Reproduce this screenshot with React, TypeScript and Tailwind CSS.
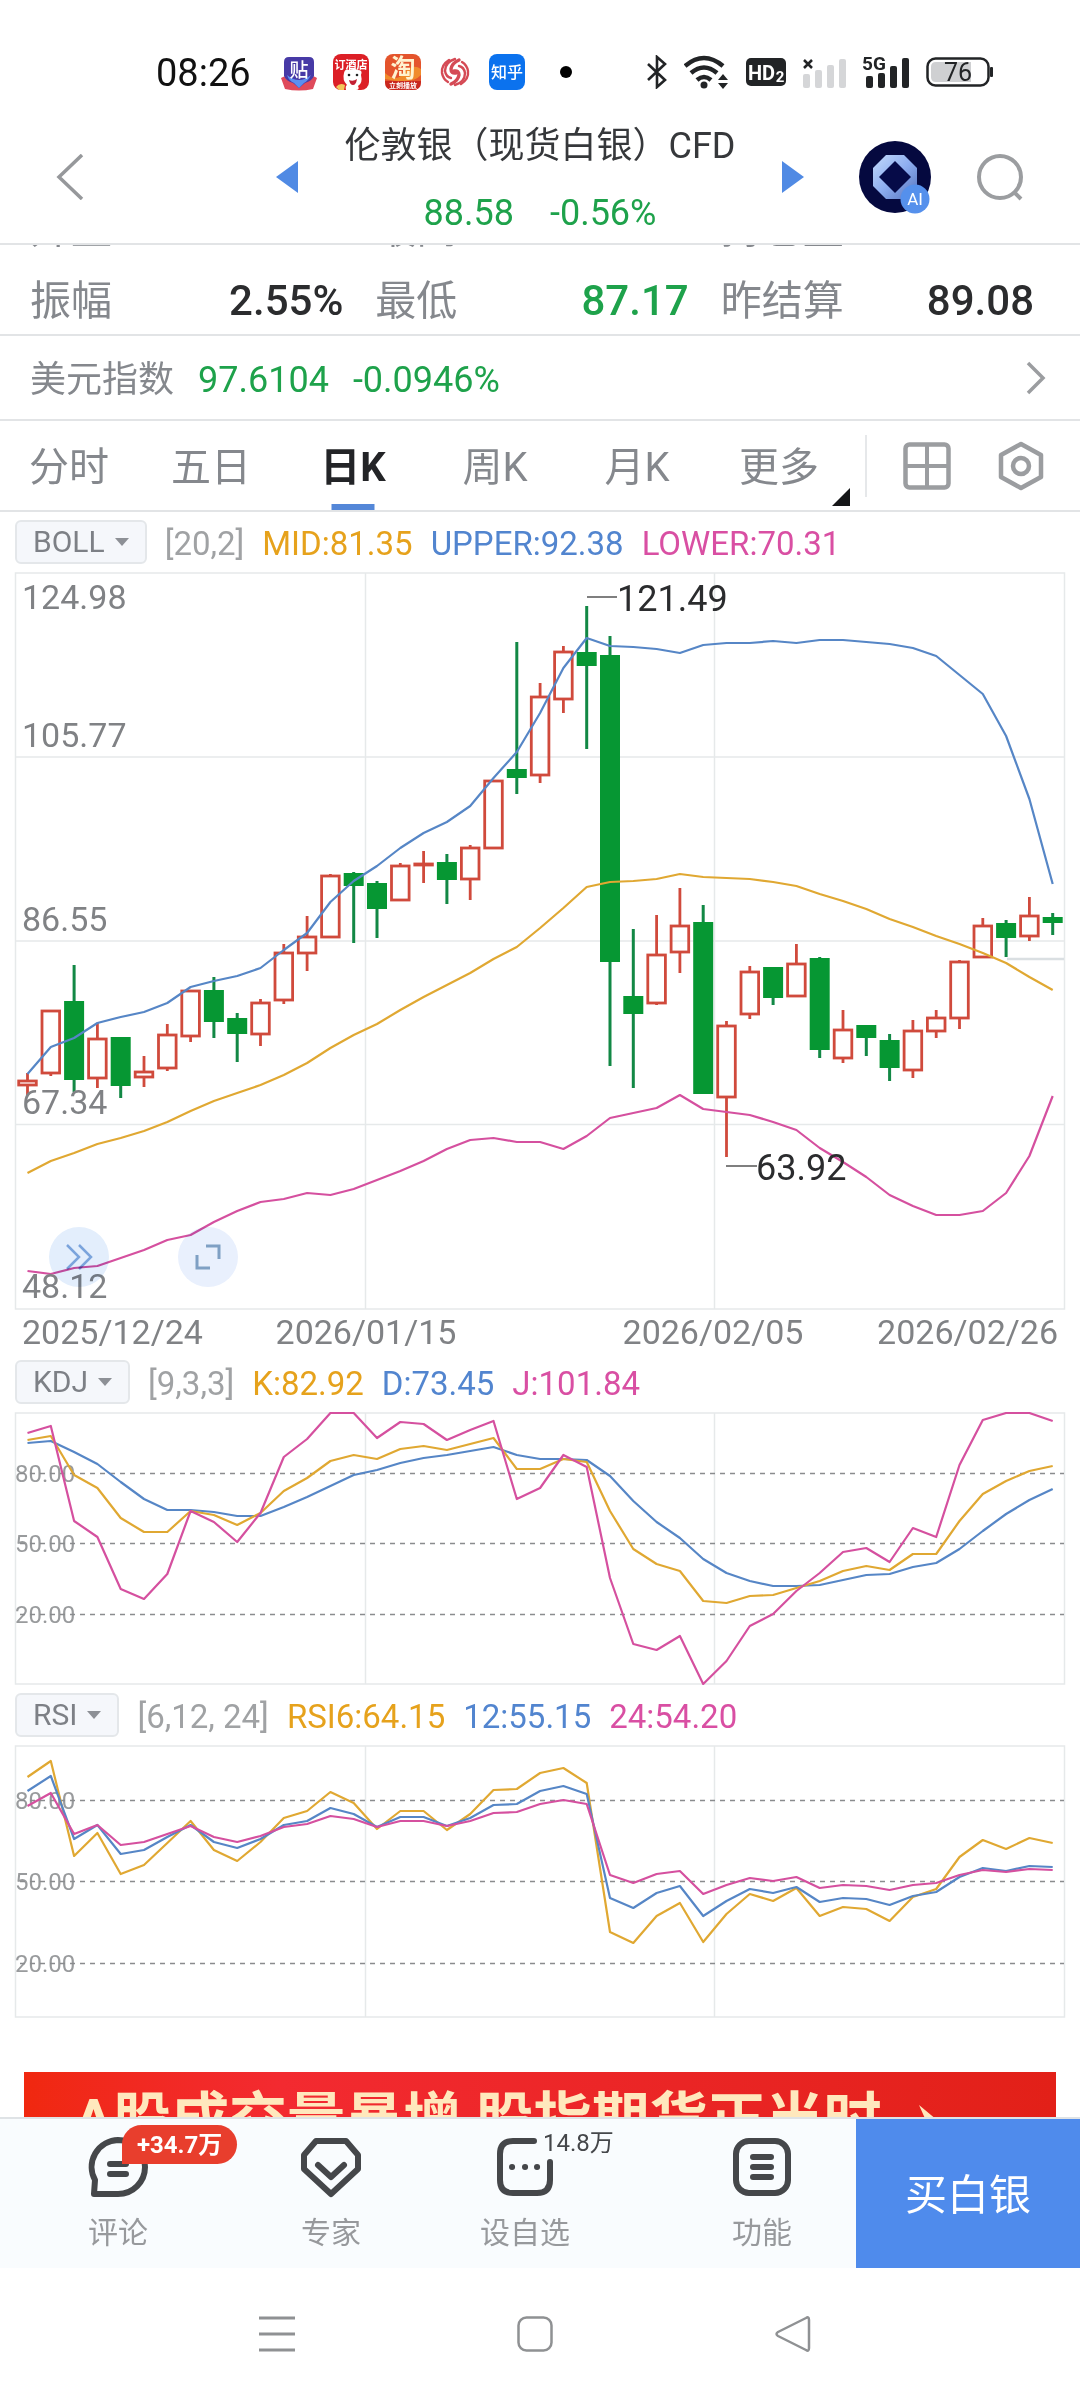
import type { ReactNode } from "react";

const STEP = 23.3;
const xAt = (i: number) => 27.5 + i * STEP;

const YELLOW = "#e0a832";
const BLUE = "#5686c6";
const PINK = "#d5509f";
const GRID = "#e6e9ea";

// direction, high, body top, body bottom, low
type Candle = ["r" | "g", number, number, number, number];

const candles: Candle[] = [
  ["r", 501, 508, 514, 523], ["r", 438, 438, 502, 504], ["g", 393, 429, 508, 520], ["r", 451, 466, 507, 516],
  ["g", 465, 465, 514, 526], ["r", 484, 499, 506, 515], ["r", 452, 462, 497, 499], ["r", 418, 418, 465, 470],
  ["g", 405, 418, 450, 466], ["g", 441, 446, 462, 490], ["r", 427, 430, 463, 474], ["r", 372, 380, 429, 432],
  ["r", 344, 364, 382, 399], ["r", 302, 303, 366, 366], ["g", 300, 301, 314, 371], ["g", 309, 311, 337, 366],
  ["r", 291, 293, 329, 329], ["r", 279, 291, 294, 311], ["g", 282, 290, 308, 332], ["r", 273, 275, 308, 328],
  ["r", 208, 208, 277, 277], ["g", 70, 197, 206, 222], ["r", 111, 124, 204, 211], ["r", 74, 79, 128, 141],
  ["g", 34, 80, 94, 177], ["g", 64, 83, 390, 494], ["g", 357, 424, 442, 516], ["r", 343, 382, 432, 433],
  ["r", 316, 353, 381, 401], ["g", 333, 350, 522, 522], ["r", 449, 453, 526, 585], ["r", 394, 399, 443, 447],
  ["g", 395, 395, 426, 433], ["r", 372, 391, 425, 425], ["g", 385, 386, 478, 486], ["r", 438, 457, 487, 491],
  ["g", 453, 453, 466, 484], ["g", 462, 468, 496, 509], ["r", 448, 458, 499, 506], ["r", 438, 445, 460, 466],
  ["r", 388, 389, 447, 457], ["r", 346, 353, 386, 386], ["g", 348, 351, 366, 385], ["r", 325, 343, 365, 369],
  ["g", 341, 345, 351, 363],
];

const boll = {
  upper: [502, 475, 466, 451, 445, 440, 431, 415, 409, 404, 396, 378, 361, 330, 309, 294, 276, 261, 250, 234, 206, 180, 141, 96, 66, 74, 75, 77, 81, 73, 71, 71, 69, 71, 68, 68, 70, 72, 76, 84, 103, 122, 164, 227, 312],
  mid: [601, 589, 581, 572, 566, 559, 550, 539, 529, 521, 513, 503, 491, 476, 463, 452, 438, 425, 413, 401, 387, 375, 356, 336, 315, 310, 309, 307, 302, 305, 306, 307, 310, 314, 322, 329, 337, 347, 355, 364, 372, 381, 391, 405, 418],
  lower: [699, 702, 696, 694, 686, 678, 668, 663, 650, 639, 630, 627, 621, 623, 617, 608, 599, 589, 577, 568, 566, 570, 570, 577, 564, 546, 541, 536, 523, 537, 540, 543, 550, 558, 576, 590, 605, 623, 634, 643, 643, 639, 621, 584, 524],
};

const kdj = {
  k: [28, 24, 63, 76, 106, 120, 120, 99, 103, 113, 101, 79, 66, 49, 43, 47, 37, 34, 38, 32, 26, 57, 57, 47, 50, 99, 137, 152, 159, 189, 191, 184, 183, 176, 169, 159, 154, 158, 142, 142, 109, 82, 69, 59, 54],
  d: [31, 29, 40, 52, 70, 87, 98, 98, 100, 104, 104, 95, 85, 74, 63, 58, 51, 46, 43, 39, 35, 43, 47, 47, 48, 64, 89, 110, 126, 147, 161, 169, 174, 174, 173, 168, 163, 162, 155, 151, 137, 119, 102, 88, 77],
  j: [21, 14, 109, 125, 177, 187, 162, 99, 110, 130, 101, 45, 27, 1, 1, 26, 10, 12, 28, 18, 9, 87, 76, 43, 55, 166, 232, 238, 224, 272, 249, 214, 202, 179, 161, 140, 136, 150, 116, 125, 53, 8, 1, 1, 9],
};

const rsi = {
  six: [32, 16, 111, 88, 129, 120, 98, 76, 105, 116, 97, 73, 66, 47, 58, 84, 66, 66, 85, 69, 45, 44, 28, 23, 38, 187, 198, 171, 158, 197, 169, 149, 156, 143, 171, 162, 164, 176, 152, 144, 112, 95, 104, 93, 98],
  twelve: [46, 31, 94, 80, 109, 105, 92, 80, 97, 103, 94, 80, 76, 63, 69, 82, 72, 72, 81, 73, 60, 59, 46, 41, 49, 153, 163, 148, 141, 171, 156, 144, 148, 142, 157, 153, 154, 160, 151, 147, 132, 123, 126, 121, 122],
  twentyFour: [61, 48, 89, 80, 100, 97, 89, 81, 92, 97, 91, 82, 79, 71, 74, 82, 76, 76, 81, 76, 68, 67, 59, 55, 59, 130, 138, 129, 126, 149, 140, 133, 136, 132, 143, 140, 141, 145, 140, 138, 130, 125, 127, 124, 125],
};

function Series({ values, color }: { values: number[]; color: string }) {
  return (
    <polyline
      points={values.map((y, i) => `${xAt(i)},${y}`).join(" ")}
      fill="none"
      stroke={color}
      strokeWidth={2.2}
      strokeLinejoin="round"
    />
  );
}

function Frame({ height }: { height: number }) {
  return (
    <g stroke={GRID} strokeWidth={1.5} fill="none">
      <rect x={15.5} y={1} width={1049} height={height} />
      <path d={`M365.5 1V${height + 1}M714.5 1V${height + 1}`} />
    </g>
  );
}

function MainChart() {
  return (
    <div className="relative">
      <svg viewBox="0 0 1080 780" className="block h-auto w-full" role="img" aria-label="日K线图">
        <Frame height={736} />
        <path d="M15.5 185H1064.5M15.5 369H1064.5M15.5 552.5H1064.5" stroke={GRID} strokeWidth={1.5} />
        <path d="M1007 387H1064" stroke="#dadfe2" strokeWidth={2.5} />
        {candles.map(([dir, high, top, bottom, low], i) => {
          const x = xAt(i);
          if (dir === "g") {
            return (
              <g key={i} fill="#069733">
                <rect x={x - 1.5} y={high} width={3} height={low - high} fill="#128845" />
                <rect x={x - 10} y={top} width={20} height={bottom - top} />
              </g>
            );
          }
          return (
            <g key={i} stroke="#d04a3c" strokeWidth={2.8} fill="none">
              <path d={`M${x} ${high}V${top}M${x} ${bottom}V${low}`} />
              <rect x={x - 8.8} y={top + 1} width={17.6} height={Math.max(bottom - top - 2, 1)} />
            </g>
          );
        })}
        <Series values={boll.upper} color={BLUE} />
        <Series values={boll.mid} color={YELLOW} />
        <Series values={boll.lower} color={PINK} />
        <g fill="#808285" fontSize={34}>
          <text x={22} y={37}>124.98</text>
          <text x={22} y={175}>105.77</text>
          <text x={22} y={359}>86.55</text>
          <text x={22} y={542}>67.34</text>
          <text x={22} y={726}>48.12</text>
          <text x={22} y={772}>2025/12/24</text>
          <text x={366} y={772} textAnchor="middle">2026/01/15</text>
          <text x={713} y={772} textAnchor="middle">2026/02/05</text>
          <text x={1058} y={772} textAnchor="end">2026/02/26</text>
        </g>
        <path d="M587 25H617M726 594H757" stroke="#555" strokeWidth={1.5} />
        <g fill="#2b2c2e" fontSize={36}>
          <text x={617} y={39}>121.49</text>
          <text x={756} y={608}>63.92</text>
        </g>
      </svg>
      <button type="button" aria-label="快进" className="absolute bottom-[65px] left-[49px] flex size-[60px] items-center justify-center rounded-full bg-[#e3eefc] mix-blend-multiply">
        <svg viewBox="0 0 28 26" className="h-[26px] w-7" fill="none" stroke="#7ba4dc" strokeWidth={2.5}>
          <path d="M2 1l12 12L2 25M14 1l12 12-12 12" />
        </svg>
      </button>
      <button type="button" aria-label="全屏" className="absolute bottom-[65px] left-[178px] flex size-[60px] items-center justify-center rounded-full bg-[#e9f0fd] mix-blend-multiply">
        <svg viewBox="0 0 26 26" className="size-[26px]" fill="none" stroke="#7fa0c4" strokeWidth={3}>
          <path d="M11 2H24V15M2 11V24H15" />
        </svg>
      </button>
    </div>
  );
}

function SubChart({ label, levels, lines }: { label: string; levels: [number, string][]; lines: [number[], string][] }) {
  return (
    <svg viewBox="0 0 1080 273" className="block h-auto w-full" role="img" aria-label={label}>
      <Frame height={271} />
      {levels.map(([y, text]) => (
        <g key={text}>
          <text x={15} y={y + 9} fontSize={24} fill="#999b9d">{text}</text>
          <path d={`M20 ${y + 0.5}H1064`} stroke="#8a8c8e" strokeWidth={1.5} strokeDasharray="5 5" />
        </g>
      ))}
      {lines.map(([values, color]) => (
        <Series key={color} values={values} color={color} />
      ))}
    </svg>
  );
}

function IndicatorRow({ name, options, params, values }: { name: string; options: string[]; params: string; values: [string, string][] }) {
  return (
    <div className="flex h-[60px] items-center gap-[18px] px-[15px] text-[33px] leading-none">
      <div className="relative flex h-11 items-center">
        <select
          aria-label={`${name} 指标`}
          defaultValue={name}
          className="field-sizing-content h-11 appearance-none rounded-md border-2 border-[#e4e7ea] bg-[#f5f7fb] pr-[40px] pl-4 text-[30px] leading-none text-[#7d8086]"
        >
          {options.map((o) => (
            <option key={o}>{o}</option>
          ))}
        </select>
        <svg viewBox="0 0 14 8" className="pointer-events-none absolute right-[18px] h-2 w-3.5" fill="#8d9096">
          <path d="M0 0H14L7 8z" />
        </svg>
      </div>
      <span className="pt-0.5 text-[#a0a2a4]">{params}</span>
      {values.map(([text, cls]) => (
        <span key={text} className={`pt-0.5 ${cls}`}>{text}</span>
      ))}
    </div>
  );
}

function StatusBar() {
  return (
    <div className="flex h-[110px] items-center pt-[34px] pr-[86px] pl-[156px]">
      <span className="pt-0.5 text-[38px] leading-none text-[#111]">08:26</span>
      <div className="ml-[29px] flex items-center gap-[14px]">
        <svg viewBox="0 0 38 38" className="size-[38px]">
          <path d="M1 25q6-4 10 1l8 3 8-3q5-5 10-1l-4 11q-14 3-28 0z" fill="#df4a5b" />
          <path d="M9 4h20q5 0 5 5v14q-2 5-9 7l-6 5-6-5q-7-2-9-7V9q0-5 5-5z" fill="#473aa6" />
          <path d="M7 22q12 10 24 0-3 6-7 8l-5 5-5-5q-5-2-7-8z" fill="#5b8ff0" />
          <text x="19" y="24" fontSize="19" fill="#fff" textAnchor="middle" fontWeight="500">贴</text>
        </svg>
        <svg viewBox="0 0 38 38" className="size-[38px]">
          <rect x="1" y="1" width="36" height="36" rx="8" fill="#dc1f26" />
          <text x="19" y="16" fontSize="11" fill="#fff" textAnchor="middle" fontWeight="700">订酒店</text>
          <path d="M12 20q1-5 5-3 5-2 9 0 5 0 3 5 2 8-3 11 2 4-2 4H14q-1-4 1-5-5-5-3-12z" fill="#fff" />
          <path d="M17 27q4 2 8-1-1 6-4 6t-4-5z" fill="#c32034" />
          <circle cx="17" cy="22" r="1.3" fill="#222" />
          <circle cx="25" cy="22" r="1.3" fill="#222" />
          <path d="M4 34q4-5 9-2l-1 5H7z" fill="#f3c65a" />
        </svg>
        <svg viewBox="0 0 38 38" className="size-[38px]">
          <rect x="1" y="1" width="36" height="36" rx="8" fill="#e4542c" />
          <path d="M1 20Q12 30 20 20T37 16V22Q28 32 1 26z" fill="#f08b2c" />
          <text x="19" y="24" fontSize="25" fill="#fff3d0" textAnchor="middle" fontWeight="700">淘</text>
          <path d="M1 28H37V29q0 8-8 8H9q-8 0-8-8z" fill="#c9271e" />
          <text x="19" y="35" fontSize="7" fill="#fff" textAnchor="middle" fontWeight="700">立刻播放</text>
        </svg>
        <svg viewBox="0 0 38 38" className="size-[38px]" fill="none" stroke="#d54a55" strokeWidth="2.4" strokeLinecap="round">
          <path d="M20 20q-5 1-5-4 1-6 8-9M18 18q5-1 5 4-1 6-8 9" strokeWidth="3.4" />
          <path d="M19 6Q9 9 9 18q1 6 6 7M19 32q10-3 10-12-1-6-6-7" />
          <path d="M13 7Q5 12 6 20q1 6 6 9M25 31q8-5 7-13-1-6-6-9" />
        </svg>
        <svg viewBox="0 0 38 38" className="size-[38px]">
          <rect x="1" y="1" width="36" height="36" rx="8" fill="#0b72ee" />
          <text x="19" y="25" fontSize="16" fill="#fff" textAnchor="middle" fontWeight="500">知乎</text>
        </svg>
      </div>
      <span className="ml-[34px] size-3 rounded-full bg-black" />
      <div className="ml-auto flex items-center gap-4 text-[#222426]">
        <svg viewBox="0 0 22 34" className="h-[34px] w-[22px]" fill="none" stroke="currentColor" strokeWidth="2.6">
          <path d="M2 9L19 25 11 32V2L19 9 2 25" />
        </svg>
        <svg viewBox="0 0 46 34" className="h-[34px] w-[46px]" fill="none" stroke="currentColor" strokeWidth="4.5">
          <path d="M1 11Q20-5 39 11M7 18Q20 7 33 18M13 25Q20 19 27 25" />
          <circle cx="20" cy="30" r="3.500" fill="currentColor" stroke="none" />
          <path d="M34 25l5-6 5 6zM34 28l5 6 5-6z" fill="currentColor" stroke="none" />
        </svg>
        <svg viewBox="0 0 40 28" className="h-7 w-10">
          <rect width="40" height="28" rx="5" fill="currentColor" />
          <text x="2" y="22" fontSize="20" fontWeight="700" fill="#fff">HD</text>
          <text x="34" y="24" fontSize="15" fontWeight="700" fill="#fff" textAnchor="middle">2</text>
        </svg>
        <svg viewBox="0 0 44 32" className="h-8 w-11">
          <path d="M2 4l8 8M10 4l-8 8" stroke="currentColor" strokeWidth="2.500" />
          <g fill="#d5d6d8">
            <rect x="1" y="18" width="7" height="14" rx="2" />
            <rect x="13" y="14" width="7" height="18" rx="2" />
            <rect x="25" y="9" width="7" height="23" rx="2" />
            <rect x="37" y="3" width="7" height="29" rx="2" />
          </g>
        </svg>
        <svg viewBox="0 0 48 34" className="h-[34px] w-12" fill="currentColor">
          <text x="0" y="15" fontSize="19" fontWeight="700">5G</text>
          <rect x="4" y="21" width="7" height="12" rx="2" />
          <rect x="16" y="18" width="7" height="15" rx="2" />
          <rect x="28" y="11" width="7" height="22" rx="2" />
          <rect x="40" y="3" width="7" height="30" rx="2" />
        </svg>
        <svg viewBox="0 0 68 32" className="h-8 w-[68px]">
          <rect x="1.500" y="2.500" width="61" height="27" rx="8" fill="#fff" stroke="currentColor" strokeWidth="2.500" />
          <path d="M10 6H45V26H10q-5 0-5-5V11q0-5 5-5z" fill="#cfd0d2" />
          <rect x="64" y="11" width="3" height="10" rx="1" fill="currentColor" />
          <text x="32" y="25" fontSize="25" textAnchor="middle" fill="currentColor">76</text>
        </svg>
      </div>
    </div>
  );
}

function Header() {
  return (
    <header className="flex h-[135px] items-center border-b-2 border-[#e2e4e6] px-14">
      <button type="button" aria-label="返回" className="w-[30px]">
        <svg viewBox="0 0 28 46" className="h-[46px] w-7" fill="none" stroke="#96989b" strokeWidth="3.500">
          <path d="M26 1L3 23 26 45" />
        </svg>
      </button>
      <div className="mr-[54px] ml-[190px] flex flex-1 items-center justify-between">
        <button type="button" aria-label="上一个">
          <svg viewBox="0 0 22 32" className="h-8 w-[22px]" fill="#508ae4"><path d="M22 0V32L0 16z" /></svg>
        </button>
        <div className="pt-1.5 text-center text-[36px] leading-[67px]">
          <h1 className="whitespace-nowrap text-[#36383b]">伦敦银（现货白银）CFD</h1>
          <p className="flex justify-center gap-9 text-[#1ea24b]"><span>88.58</span><span>-0.56%</span></p>
        </div>
        <button type="button" aria-label="下一个">
          <svg viewBox="0 0 22 32" className="h-8 w-[22px]" fill="#508ae4"><path d="M0 0V32L22 16z" /></svg>
        </button>
      </div>
      <button type="button" aria-label="AI 助手">
        <svg viewBox="0 0 74 74" className="size-[74px]">
          <defs>
            <linearGradient id="ring" x1="0" y1="0" x2="1" y2="1">
              <stop offset="0" stopColor="#c3dafb" />
              <stop offset="0.5" stopColor="#8eaef0" />
              <stop offset="1" stopColor="#5371bd" />
            </linearGradient>
          </defs>
          <circle cx="37" cy="37" r="36" fill="#05093f" />
          <path d="M28 15H46L59 28V46L46 59H28L15 46V28z" fill="url(#ring)" />
          <path d="M37 21L53 37 37 53 21 37z" fill="#060b48" />
          <circle cx="57" cy="59" r="14.500" fill="#5590ec" />
          <text x="57" y="65" fontSize="17" fill="#fff" textAnchor="middle">AI</text>
        </svg>
      </button>
      <button type="button" aria-label="搜索" className="ml-11">
        <svg viewBox="0 0 48 48" className="size-12" fill="none" stroke="#9b9da0" strokeWidth="4">
          <circle cx="24" cy="24" r="21" />
          <path d="M38 39L45 46" />
        </svg>
      </button>
    </header>
  );
}

const stats: [string, string, string][] = [
  ["开盘", "89.08", "text-[#2b2c2e]"],
  ["最高", "89.43", "text-[#2b2c2e]"],
  ["持仓量", "0", "text-[#2b2c2e]"],
  ["振幅", "2.55%", "text-[#2b2c2e]"],
  ["最低", "87.17", "text-[#1ea24b]"],
  ["昨结算", "89.08", "text-[#2b2c2e]"],
];

const tabs = ["分时", "五日", "日K", "周K", "月K", "更多"];

function ToolItem({ label, children }: { label: string; children: ReactNode }) {
  return (
    <button type="button" className="relative flex flex-col items-center pt-[17px] text-[30px] leading-none text-[#97999c]">
      {children}
      <span className="mt-5">{label}</span>
    </button>
  );
}

export default function App() {
  return (
    <div className="flex min-h-screen w-full flex-col overflow-x-hidden bg-white font-['Roboto','Noto_Sans_CJK_SC',sans-serif]">
      <StatusBar />
      <Header />

      <section className="flex h-[91px] flex-col justify-end overflow-hidden border-b-2 border-[#e2e4e6]">
        <dl className="grid grid-cols-3 gap-x-8 pr-[46px] pl-[30px]">
          {stats.map(([name, value, cls]) => (
            <div key={name} className="flex h-[72px] items-center justify-between pt-1.5">
              <dt className="text-[41px] leading-none text-[#85888d]">{name}</dt>
              <dd className={`text-[42px] leading-none font-medium ${cls}`}>{value}</dd>
            </div>
          ))}
        </dl>
      </section>

      <a href="#dxy" className="flex h-[85px] items-center gap-[24px] border-b-2 border-[#e2e4e6] pr-[34px] pl-[30px] text-[36px] leading-none text-[#1ea24b]">
        <span className="pt-1 text-[#85888d]">美元指数</span>
        <span className="pt-1">97.6104</span>
        <span className="pt-1">-0.0946%</span>
        <svg viewBox="0 0 20 34" className="ml-auto h-[34px] w-5" fill="none" stroke="#9b9da0" strokeWidth="3.500">
          <path d="M2 2L17 17 2 32" />
        </svg>
      </a>

      <nav className="flex h-[91px] items-center border-b-2 border-[#e2e4e6]">
        <div className="-ml-0.5 flex h-full flex-1">
          {tabs.map((t) => (
            <button
              key={t}
              type="button"
              className={
                t === "日K"
                  ? "relative flex-1 pt-1 text-[40px] leading-none font-bold text-[#232427] after:absolute after:bottom-0 after:left-1/2 after:h-1.5 after:w-[43px] after:-translate-x-1/2 after:bg-[#5487d8]"
                  : "relative flex-1 pt-1 text-[40px] leading-none text-[#85888d]"
              }
            >
              {t}
              {t === "更多" && (
                <svg viewBox="0 0 18 18" className="absolute right-0 bottom-1 size-[18px]" fill="#151618"><path d="M18 0V18H0z" /></svg>
              )}
            </button>
          ))}
        </div>
        <div className="mr-[35px] ml-[15px] flex items-center border-l-2 border-[#e6e8ea] py-1.5 pl-9">
          <button type="button" aria-label="多图">
            <svg viewBox="0 0 48 48" className="size-12" fill="none" stroke="#9b9da0" strokeWidth="4.500">
              <rect x="2.500" y="2.500" width="43" height="43" rx="4" />
              <path d="M24 2V46M2 24H46" strokeWidth="4" />
            </svg>
          </button>
          <button type="button" aria-label="设置" className="ml-[46px]">
            <svg viewBox="0 0 48 50" className="h-[50px] w-12" fill="none" stroke="#9b9da0" strokeWidth="4.500" strokeLinejoin="round">
              <path d="M24 3L44 14V36L24 47 4 36V14z" />
              <circle cx="24" cy="25" r="8" />
            </svg>
          </button>
        </div>
      </nav>

      <IndicatorRow
        name="BOLL"
        options={["BOLL", "MA"]}
        params="[20,2]"
        values={[["MID:81.35", "text-[#e6a21c]"], ["UPPER:92.38", "text-[#5285cf]"], ["LOWER:70.31", "text-[#d94fa3]"]]}
      />
      <MainChart />
      <IndicatorRow
        name="KDJ"
        options={["KDJ", "MACD"]}
        params="[9,3,3]"
        values={[["K:82.92", "text-[#e6a21c]"], ["D:73.45", "text-[#5285cf]"], ["J:101.84", "text-[#d94fa3]"]]}
      />
      <SubChart label="KDJ" levels={[[61, "80.00"], [131, "50.00"], [202, "20.00"]]} lines={[[kdj.d, BLUE], [kdj.k, YELLOW], [kdj.j, PINK]]} />
      <IndicatorRow
        name="RSI"
        options={["RSI", "WR"]}
        params="[6,12, 24]"
        values={[["RSI6:64.15", "text-[#e6a21c]"], ["12:55.15", "text-[#5285cf]"], ["24:54.20", "text-[#d94fa3]"]]}
      />
      <SubChart label="RSI" levels={[[55, "80.00"], [136, "50.00"], [218, "20.00"]]} lines={[[rsi.six, YELLOW], [rsi.twelve, BLUE], [rsi.twentyFour, PINK]]} />

      <a
        href="#promo"
        className="mx-6 mt-[54px] flex h-[45px] items-start gap-8 overflow-hidden bg-linear-to-r from-[#f0280f] via-[#f32a30] via-25% to-[#e22018] pt-[19px] pl-[50px] text-[58px] leading-none font-bold whitespace-nowrap text-[#ffe8bd]"
      >
        <span>A股成交量暴增 股指期货正当时</span>
        <svg viewBox="0 0 30 50" className="h-[50px] w-[30px] shrink-0" fill="#ffe8bd"><path d="M6 14L30 34 6 50q8-12 8-18z" /></svg>
      </a>

      <footer className="grid h-[151px] grid-cols-[236fr_190fr_198fr_232fr_224fr] border-t-2 border-[#dfe3e6] bg-[#f9fcfe]">
        <ToolItem label="评论">
          <svg viewBox="0 0 62 62" className="size-[62px]" fill="none" stroke="#45474a" strokeWidth="6" strokeLinejoin="round">
            <path d="M31 4A27 27 0 1 1 31 58H7L8 44A27 27 0 0 1 31 4z" />
            <path d="M23 28H39M23 38H39" strokeLinecap="round" />
          </svg>
          <span className="absolute top-1.5 left-1/2 ml-1 flex h-[39px] items-center rounded-[20px] rounded-bl-none bg-[#e83e2d] px-[15px] text-[24px] leading-none font-bold whitespace-nowrap text-white">+34.7万</span>
        </ToolItem>
        <ToolItem label="专家">
          <svg viewBox="0 0 62 62" className="size-[62px]" fill="none" stroke="#45474a" strokeWidth="6" strokeLinejoin="round">
            <path d="M16 5H46L58 19V33L31 58 4 33V19z" />
            <path d="M18 29L31 41 44 29" strokeLinecap="round" />
          </svg>
        </ToolItem>
        <ToolItem label="设自选">
          <svg viewBox="0 0 62 62" className="size-[62px]" fill="none" stroke="#45474a" strokeWidth="6" strokeLinecap="round">
            <path d="M40 5H19Q6 5 6 18V44Q6 57 19 57H43Q56 57 56 44V26" />
            <path d="M18 31H18.100M31 31H31.100M43 31H43.100" />
          </svg>
          <span className="absolute top-[12px] left-1/2 ml-[18px] text-[24px] leading-none whitespace-nowrap text-[#45474a]">14.8万</span>
        </ToolItem>
        <div className="flex flex-col pl-11">
          <ToolItem label="功能">
            <svg viewBox="0 0 62 62" className="size-[62px]" fill="none" stroke="#45474a" strokeWidth="6">
              <rect x="5" y="5" width="52" height="52" rx="13" />
              <path d="M22 21H40M22 31H40M22 41H40" strokeLinecap="round" />
            </svg>
          </ToolItem>
        </div>
        <button type="button" className="bg-[#4f8bec] pt-1 text-[42px] leading-none text-white">买白银</button>
      </footer>

      <div className="flex flex-1 items-center justify-center gap-[222px] pr-[10px] text-[#8f9193]">
        <button type="button" aria-label="最近任务">
          <svg viewBox="0 0 36 36" className="size-9" stroke="currentColor" strokeWidth="3"><path d="M0 2H36M0 18H36M0 34H36" /></svg>
        </button>
        <button type="button" aria-label="主页">
          <svg viewBox="0 0 36 36" className="size-9" fill="none" stroke="currentColor" strokeWidth="2.500"><rect x="1.500" y="1.500" width="33" height="33" rx="8" /></svg>
        </button>
        <button type="button" aria-label="返回上一页">
          <svg viewBox="0 0 36 36" className="size-9" fill="none" stroke="currentColor" strokeWidth="2.500" strokeLinejoin="round"><path d="M31 2Q34 0 34 4V32Q34 36 31 34L3 20Q0 18 3 16z" /></svg>
        </button>
      </div>
    </div>
  );
}
